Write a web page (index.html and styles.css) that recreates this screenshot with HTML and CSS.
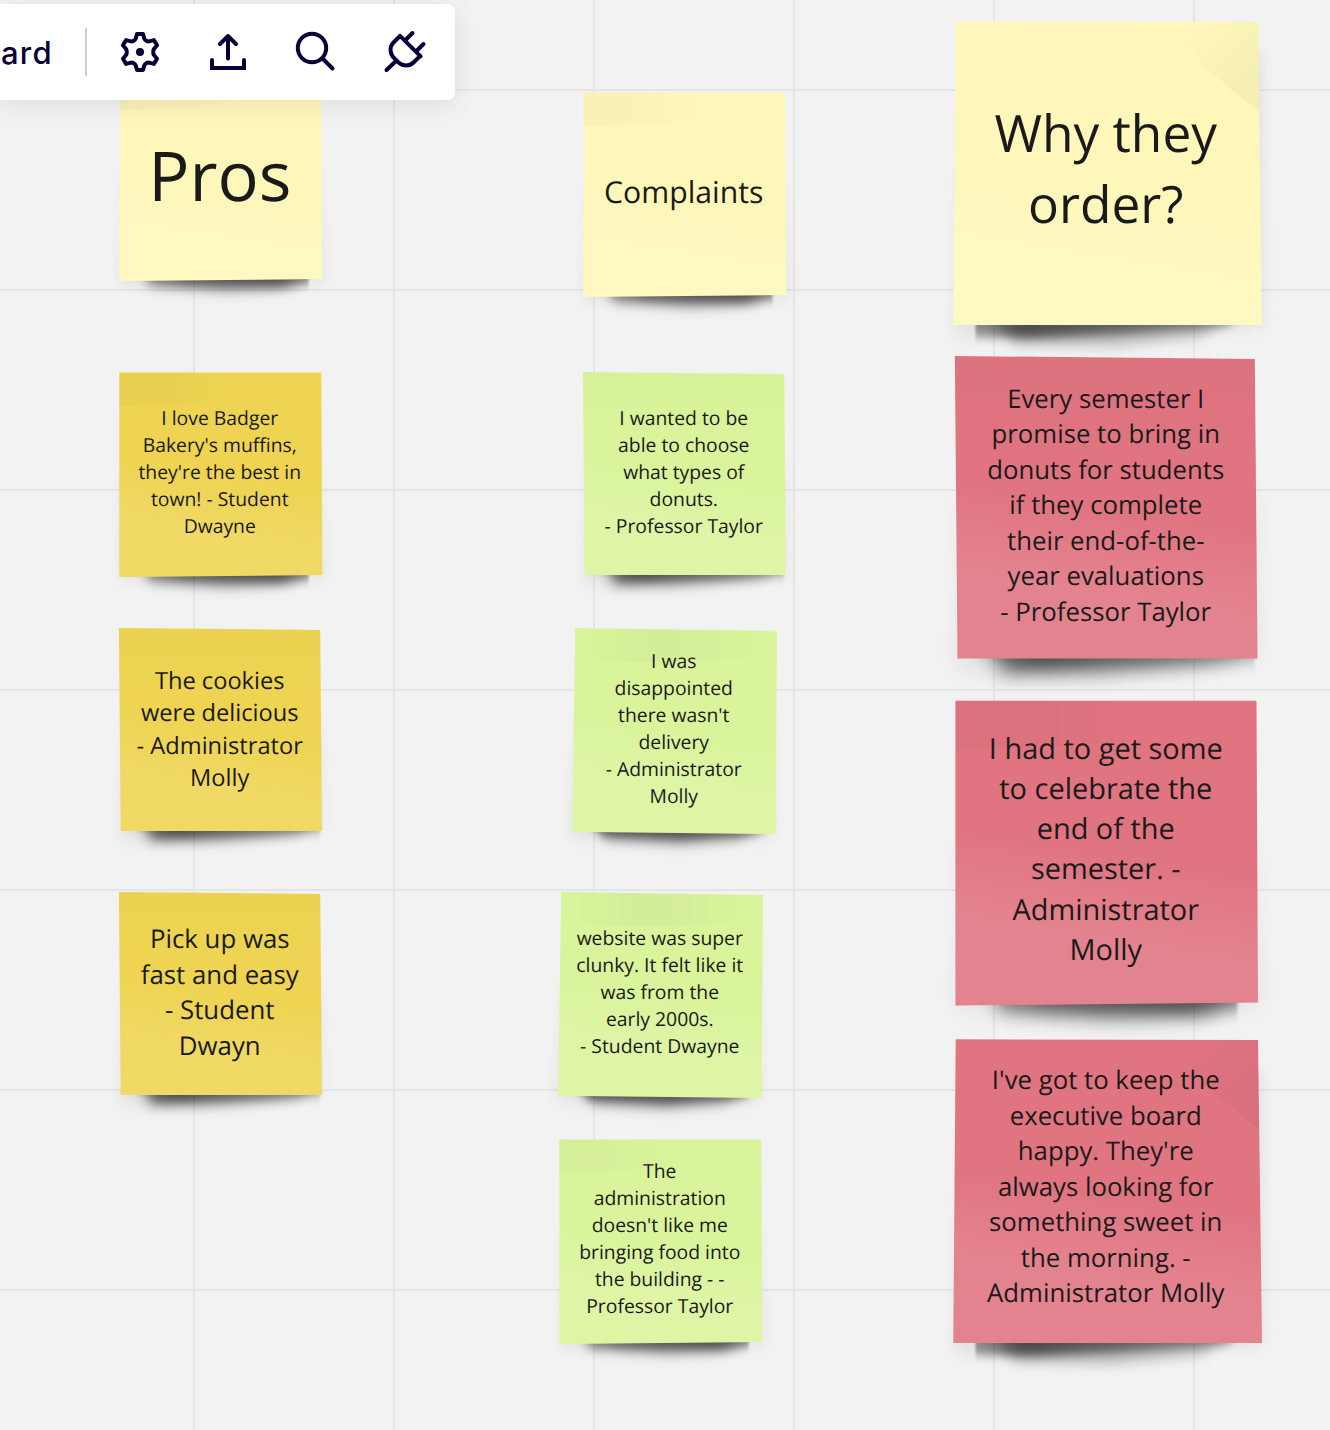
FILE: index.html
```html
<!DOCTYPE html>
<html lang="en">
<head>
<meta charset="utf-8">
<title>Board</title>
<link rel="stylesheet" href="styles.css">
</head>
<body>
<svg class="defs" width="0" height="0" aria-hidden="true">
  <defs>
    <filter id="edge" x="-10%" y="-40%" width="120%" height="180%"><feGaussianBlur stdDeviation="1"/></filter>
    <filter id="soft" x="-30%" y="-150%" width="160%" height="400%"><feGaussianBlur stdDeviation="5"/></filter>
    <filter id="haze" x="-30%" y="-150%" width="160%" height="400%"><feGaussianBlur stdDeviation="6"/></filter>
    <filter id="wide" x="-20%" y="-20%" width="140%" height="140%"><feGaussianBlur stdDeviation="8"/></filter>
    <linearGradient id="sheen" x1="0" y1="0" x2="-0.16" y2="1">
      <stop offset=".4" stop-color="#fff" stop-opacity="0"/>
      <stop offset=".68" stop-color="#fff" stop-opacity=".11"/>
      <stop offset="1" stop-color="#fff" stop-opacity=".11"/>
    </linearGradient>
    <linearGradient id="bandLeft">
      <stop offset="0" stop-color="#000" stop-opacity=".022"/>
      <stop offset=".25" stop-color="#000" stop-opacity=".02"/>
      <stop offset=".75" stop-color="#000" stop-opacity="0"/>
    </linearGradient>
    <linearGradient id="bandMid">
      <stop offset=".02" stop-color="#000" stop-opacity="0"/>
      <stop offset=".4" stop-color="#000" stop-opacity=".03"/>
      <stop offset=".6" stop-color="#000" stop-opacity=".025"/>
      <stop offset=".95" stop-color="#000" stop-opacity="0"/>
    </linearGradient>
    <linearGradient id="topShade" x1="0" y1="0" x2="0" y2="1">
      <stop offset="0" stop-color="#000" stop-opacity=".012"/>
      <stop offset=".35" stop-color="#000" stop-opacity="0"/>
    </linearGradient>
    <linearGradient id="fold" x1="0" y1="0" x2="1" y2="1">
      <stop offset=".2" stop-color="#000" stop-opacity="0"/>
      <stop offset=".8" stop-color="#000" stop-opacity=".035"/>
    </linearGradient>
    <linearGradient id="castRight">
      <stop offset="0" stop-color="#000" stop-opacity=".2"/>
      <stop offset=".25" stop-color="#000" stop-opacity=".48"/>
      <stop offset=".75" stop-color="#000" stop-opacity=".56"/>
      <stop offset="1" stop-color="#000" stop-opacity=".36"/>
    </linearGradient>
    <linearGradient id="castLeft">
      <stop offset="0" stop-color="#000" stop-opacity=".3"/>
      <stop offset=".22" stop-color="#000" stop-opacity=".58"/>
      <stop offset="1" stop-color="#000" stop-opacity=".28"/>
    </linearGradient>
    <clipPath id="clipA"><rect x="-30" y="0" width="219.5" height="260"/></clipPath>
    <clipPath id="clipB"><rect x="-30" y="0" width="231" height="260"/></clipPath>
    <clipPath id="clipD"><rect x="22.5" y="0" width="330" height="360"/></clipPath>

    <symbol id="paperA" viewBox="0 0 204 204" overflow="visible">
      <polygon points="8,90 196,90 204,206 2,208" fill="#000" opacity=".07" filter="url(#wide)"/>
      <polygon points="20,190 192,190 170,214 110,218 30,212" fill="#000" opacity=".2" filter="url(#haze)"/>
      <g filter="url(#edge)"><g clip-path="url(#clipA)"><polygon points="18,185 200,185 198,207 160,211 100,211 32,208" fill="url(#castRight)" filter="url(#soft)"/></g></g>
      <polygon points=".3,.5 202.3,.5 203.3,203 .3,205" fill="currentColor"/>
      <polygon points=".3,.5 202.3,.5 203.3,203 .3,205" fill="url(#sheen)"/>
      <polygon points=".3,.5 165,.5 140,28 .3,34" fill="url(#bandLeft)"/>
    </symbol>
    <symbol id="paperB" viewBox="0 0 204 204" overflow="visible">
      <polygon points="8,90 198,90 202,204 2,212" fill="#000" opacity=".07" filter="url(#wide)"/>
      <polygon points="16,190 196,190 180,207 100,216 30,217" fill="#000" opacity=".2" filter="url(#haze)"/>
      <g filter="url(#edge)"><g clip-path="url(#clipB)"><polygon points="12,185 214,185 212,203 150,207 80,210 36,211" fill="url(#castLeft)" filter="url(#soft)"/></g></g>
      <polygon points="-.1,0 201.2,2 203,203 1.7,203" fill="currentColor"/>
      <polygon points="-.1,0 201.2,2 203,203 1.7,203" fill="url(#sheen)"/>
      <polygon points="-.1,0 201.2,2 203,203 1.7,203" fill="url(#topShade)"/>
    </symbol>
    <symbol id="paperC" viewBox="0 0 206 206" overflow="visible">
      <polygon points="8,90 196,90 200,210 0,210" fill="#000" opacity=".07" filter="url(#wide)"/>
      <polygon points="24,190 184,190 170,213 110,219 36,215" fill="#000" opacity=".2" filter="url(#haze)"/>
      <polygon points="14,187 198,187 186,206 110,212 30,208" fill="#000" fill-opacity=".54" filter="url(#soft)"/>
      <polygon points="3.2,0 205,3 203.5,206 .2,203.8" fill="currentColor"/>
      <polygon points="3.2,0 205,3 203.5,206 .2,203.8" fill="url(#sheen)"/>
      <polygon points="3.2,0 205,3 205,28 110,34 3,33" fill="url(#bandMid)"/>
    </symbol>
    <symbol id="paperD" viewBox="0 0 309 304" overflow="visible">
      <polygon points="12,80 308,30 310,306 2,316" fill="#000" opacity=".07" filter="url(#wide)"/>
      <polygon points="40,290 285,290 250,316 160,326 60,324" fill="#000" opacity=".2" filter="url(#haze)"/>
      <g filter="url(#edge)"><g clip-path="url(#clipD)"><polygon points="6,280 305,280 275,305 170,313 80,317 6,315" fill="url(#castLeft)" filter="url(#soft)"/></g></g>
      <polygon points="2.7,.3 305,1 309,304 .3,304" fill="currentColor"/>
      <polygon points="2.7,.3 305,1 309,304 .3,304" fill="url(#sheen)"/>
      <polygon points="215,1 305,1 306.3,91 250,45" fill="url(#fold)"/>
    </symbol>
  </defs>
</svg>

<main class="board">
  <article class="note small yellow pros">
    <svg class="paper"><use href="#paperA"/></svg>
    <p class="text">Pros</p>
  </article>
  <article class="note small gold muffins">
    <svg class="paper"><use href="#paperA"/></svg>
    <p class="text">I love Badger<br>Bakery's muffins,<br>they're the best in<br>town! - Student<br>Dwayne</p>
  </article>
  <article class="note small gold cookies">
    <svg class="paper"><use href="#paperB"/></svg>
    <p class="text">The cookies<br>were delicious<br>- Administrator<br>Molly</p>
  </article>
  <article class="note small gold pickup">
    <svg class="paper"><use href="#paperB"/></svg>
    <p class="text">Pick up was<br>fast and easy<br>- Student<br>Dwayn</p>
  </article>

  <article class="note small yellow complaints">
    <svg class="paper"><use href="#paperA"/></svg>
    <p class="text">Complaints</p>
  </article>
  <article class="note small green choose">
    <svg class="paper"><use href="#paperB"/></svg>
    <p class="text">I wanted to be<br>able to choose<br>what types of<br>donuts.<br>- Professor Taylor</p>
  </article>
  <article class="note skewed green delivery">
    <svg class="paper"><use href="#paperC"/></svg>
    <p class="text">I was<br>disappointed<br>there wasn't<br>delivery<br>- Administrator<br>Molly</p>
  </article>
  <article class="note skewed green website">
    <svg class="paper"><use href="#paperC"/></svg>
    <p class="text">website was super<br>clunky. It felt like it<br>was from the<br>early 2000s.<br>- Student Dwayne</p>
  </article>
  <article class="note small green food">
    <svg class="paper"><use href="#paperA"/></svg>
    <p class="text">The<br>administration<br>doesn't like me<br>bringing food into<br>the building - -<br>Professor Taylor</p>
  </article>

  <article class="note wide yellow why">
    <svg class="paper"><use href="#paperD"/></svg>
    <p class="text">Why they<br>order?</p>
  </article>
  <article class="note large pink semester">
    <svg class="paper"><use href="#paperB"/></svg>
    <p class="text">Every semester I<br>promise to bring in<br>donuts for students<br>if they complete<br>their end-of-the-<br>year evaluations<br>- Professor Taylor</p>
  </article>
  <article class="note large pink celebrate">
    <svg class="paper"><use href="#paperA"/></svg>
    <p class="text">I had to get some<br>to celebrate the<br>end of the<br>semester. -<br>Administrator<br>Molly</p>
  </article>
  <article class="note wide pink executive">
    <svg class="paper"><use href="#paperD"/></svg>
    <p class="text">I've got to keep the<br>executive board<br>happy. They're<br>always looking for<br>something sweet in<br>the morning. -<br>Administrator Molly</p>
  </article>

  <header class="toolbar">
    <span class="title">ard</span>
    <span class="divider"></span>
    <nav class="tools">
      <svg class="icon" viewBox="116 28 48 48"><path d="M137 34h6l1.300 4.600c.6 1.600 3.200 3.100 4.900 2.800l4.700-1.300 3.200 5.200-3 3.400c-1.200 1.500-1.200 5.100 0 6.600l3 3.400-3.200 5.200-4.700-1.300c-1.700-.3-4.300 1.200-4.900 2.800l-1.300 4.600h-6l-1.300-4.600c-.6-1.600-3.200-3.100-4.900-2.800l-4.700 1.300-3.200-5.200 3-3.400c1.200-1.500 1.200-5.100 0-6.600l-3-3.400 3.200-5.200 4.700 1.300c1.700.3 4.300-1.200 4.900-2.800z"/><circle class="dot" cx="140" cy="52" r="4"/></svg>
      <svg class="icon" viewBox="204 28 48 48"><path d="M228 58.500V36M220 44l8-8 8 8"/><path class="tray" d="M212 60V68h32v-8"/></svg>
      <svg class="icon" viewBox="292 28 48 48"><circle cx="312" cy="48" r="14.200"/><path d="M322.500 58.500L332.500 68.500"/></svg>
      <svg class="icon plug" viewBox="380 28 48 48"><path d="M400 36l-6.500 6.500c-4 4-4 10.500 0 15l5 5c4.500 4 11 4 15 0l6.800-6.700M400 35.800l20.600 20.600M396.500 60.500l-10 9.500M406 39.500l6.500-6.500M417 50.500l6.500-6.500"/></svg>
    </nav>
  </header>
</main>
</body>
</html>
```
FILE: styles.css
```css
body {
  margin: 0;
}

.defs {
  position: absolute;
}

.board {
  position: relative;
  width: 1330px;
  height: 1430px;
  overflow: hidden;
  background-color: #f2f2f2;
  background-image:
    linear-gradient(90deg, #e5e5e5 2px, transparent 2px),
    linear-gradient(#e5e5e5 2px, transparent 2px);
  background-size: 200px 200px;
  background-position: 193px 89px;
}

/* Sticky notes, pinned on the free canvas */
.note {
  position: absolute;
  left: var(--x);
  top: var(--y);
  box-sizing: border-box;
  padding-top: var(--inset);
  font-family: "Open Sans", sans-serif;
  font-size: 19.35px;
  line-height: 27px;
  color: #1a1a1a;
  text-rendering: geometricPrecision;
}

.paper {
  position: absolute;
  left: 0;
  top: 0;
  width: 100%;
  height: 100%;
  overflow: visible;
}

.text {
  position: relative;
  margin: 0;
  text-align: center;
  white-space: nowrap;
}

.small { width: 204px; height: 204px; }
.small .text { width: 201.5px; }
.skewed { width: 206px; height: 206px; }
.skewed .text { width: 203.5px; }
.large { width: 304px; height: 304px; }
.large .text { width: 301.5px; }
.wide { width: 309px; height: 304px; }
.wide .text { width: 305.5px; }

.yellow .paper { color: #fef7b9; }
.gold .paper { color: #eed452; }
.green .paper { color: #daf49b; }
.pink .paper { color: #e07481; }

.pros { --x: 119px; --y: 76px; --inset: 53px; font-size: 68.6px; line-height: 94px; }
.muffins { --x: 119px; --y: 372px; --inset: 32px; }
.cookies { --x: 119px; --y: 628px; --inset: 36px; font-size: 23.65px; line-height: 32.4px; }
.pickup { --x: 119px; --y: 892px; --inset: 29px; font-size: 25.8px; line-height: 35.5px; }

.complaints { --x: 583px; --y: 92px; --inset: 79px; font-size: 30.2px; line-height: 42px; }
.choose { --x: 583px; --y: 372px; --inset: 32px; }
.delivery { --x: 572px; --y: 628px; --inset: 19px; }
.website { --x: 558px; --y: 892px; --inset: 32px; }
.food { --x: 559px; --y: 1138.5px; --inset: 18px; }

.why { --x: 953px; --y: 21px; --inset: 77px; font-size: 51.4px; line-height: 71px; }
.semester { --x: 955px; --y: 356px; --inset: 24.6px; font-size: 25.75px; line-height: 35.5px; }
.celebrate { --x: 955px; --y: 700px; --inset: 28.8px; font-size: 28.95px; line-height: 40.2px; }
.executive { --x: 953px; --y: 1039px; --inset: 23px; font-size: 25.75px; line-height: 35.5px; }

/* Toolbar floating over the board */
.toolbar {
  position: absolute;
  left: 0;
  top: 4px;
  box-sizing: border-box;
  width: 455px;
  height: 96px;
  display: flex;
  align-items: center;
  background: #fff;
  border-radius: 0 8px 8px 0;
  box-shadow: 0 4px 24px rgba(5, 0, 56, 0.09);
}

.title {
  width: 84px;
  padding: 2px 0 0 1px;
  font: 500 31px/40px Inter, sans-serif;
  letter-spacing: 1.2px;
  color: #050038;
}

.divider {
  width: 2px;
  height: 48px;
  background: #cdccd7;
}

.tools {
  display: flex;
  gap: 40px;
  padding-left: 29px;
}

.icon {
  width: 48px;
  height: 48px;
  fill: none;
  stroke: #050038;
  stroke-width: 4;
  stroke-linejoin: round;
  stroke-linecap: round;
}

.dot {
  fill: #050038;
  stroke: none;
}

.plug,
.tray {
  stroke-linejoin: miter;
}
```
